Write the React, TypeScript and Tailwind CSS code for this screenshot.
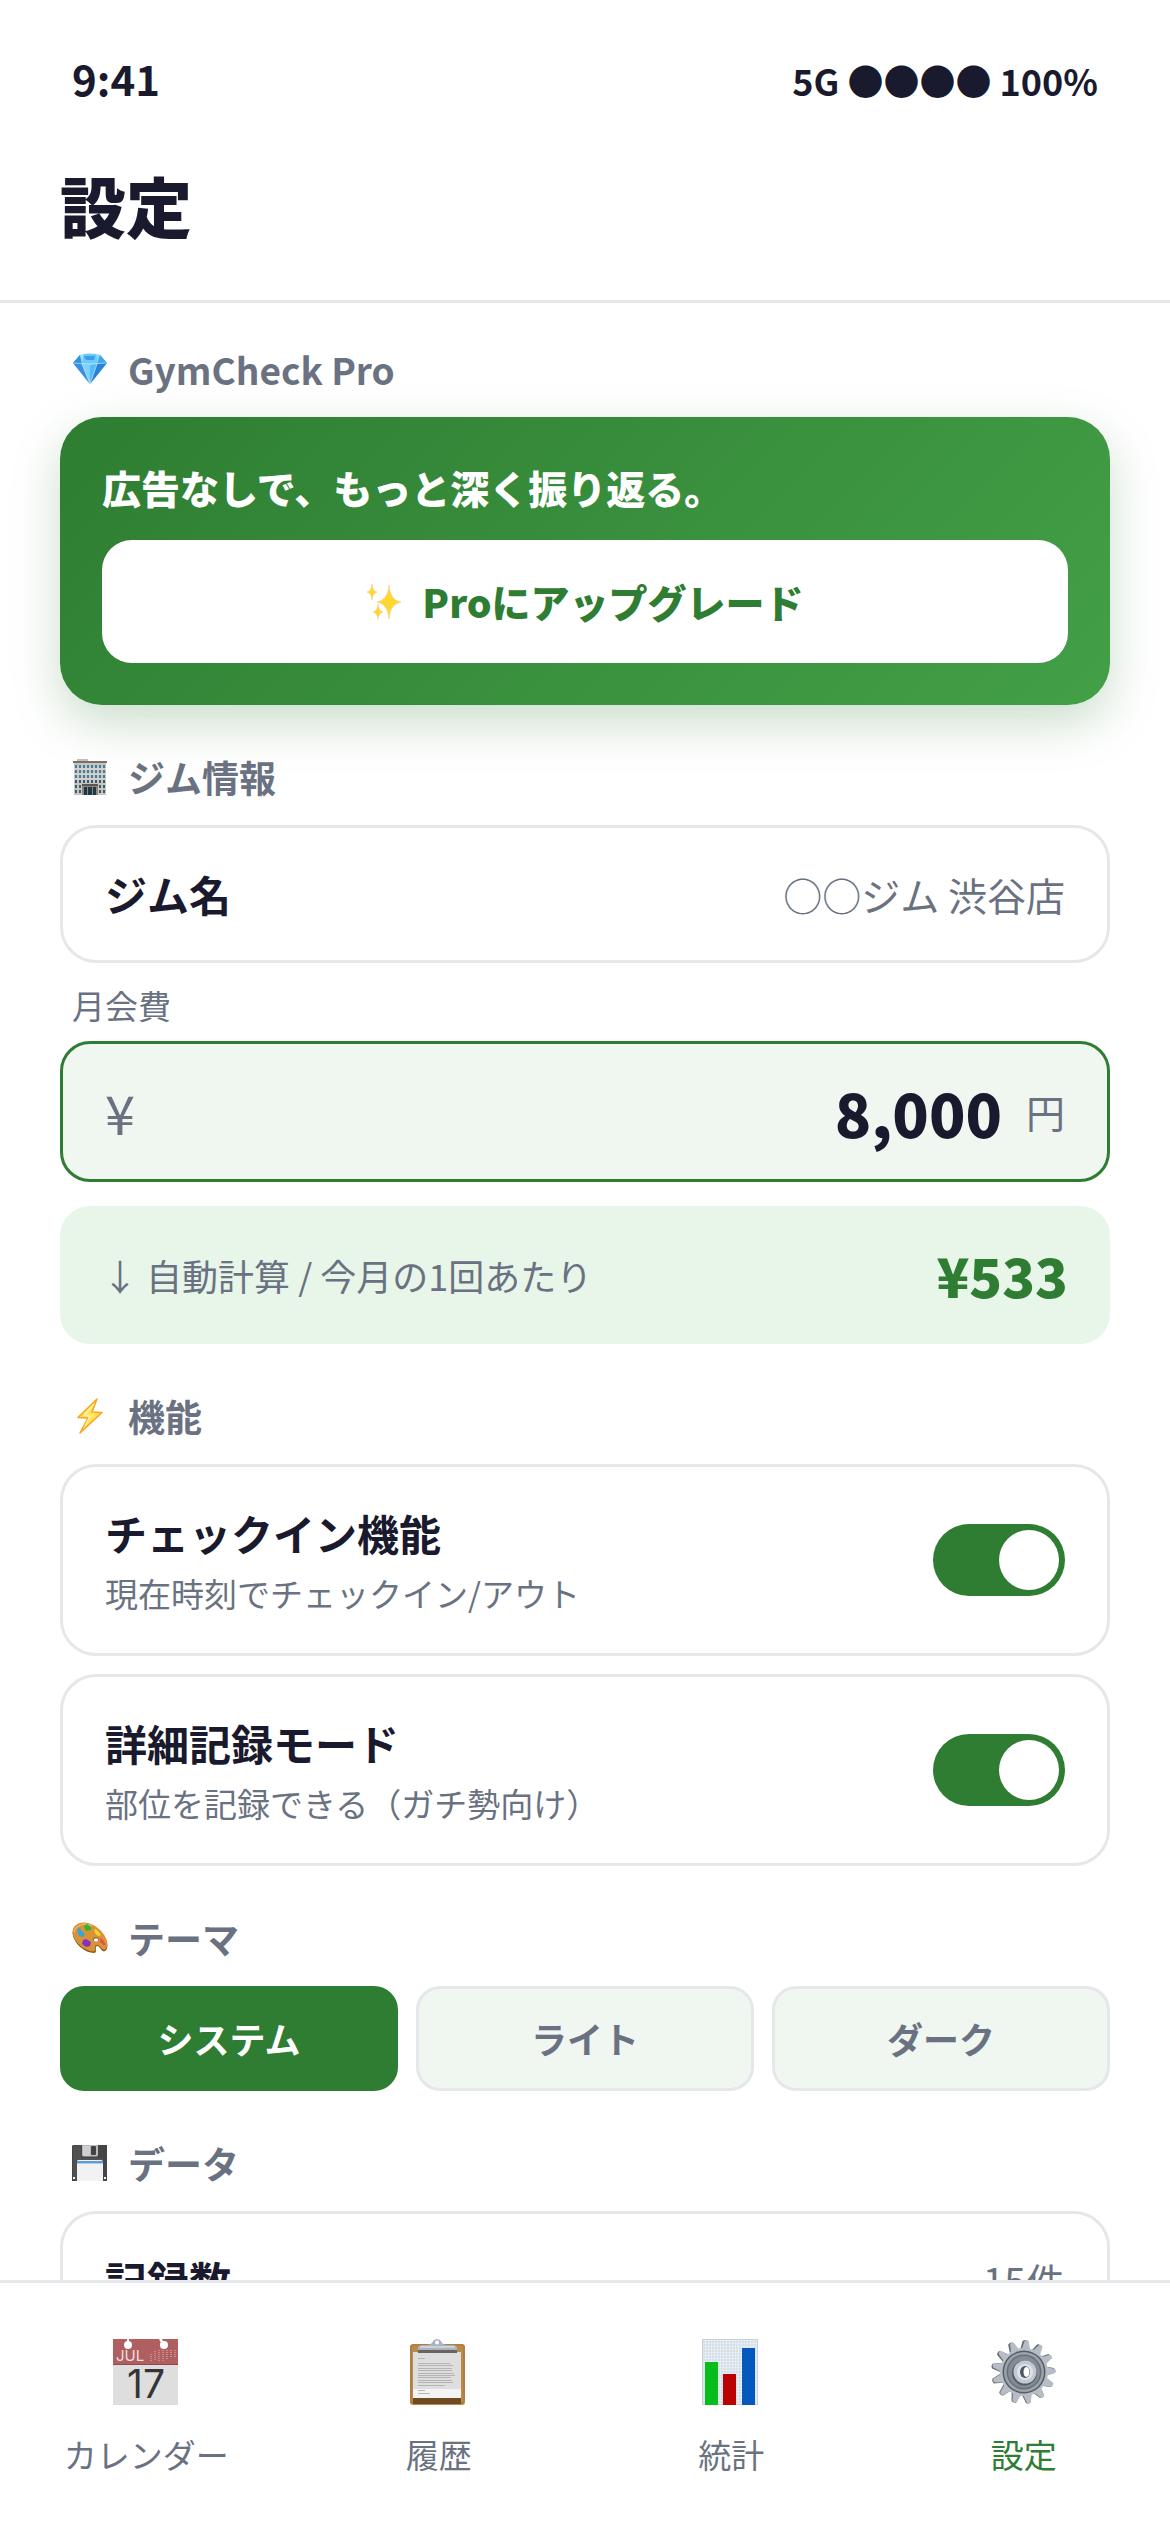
import { useState } from "react";
import type { ReactNode } from "react";

const inlineIcon = "h-9 w-9 shrink-0";
const tabIcon = "h-[66px] w-[66px]";

function DiamondIcon() {
  return (
    <svg viewBox="0 0 36 36" className={inlineIcon} aria-hidden="true">
      <path d="M8 4 Q18 2 28 4 L35 12 L18 33 L1 12Z" fill="#4db5f5" />
      <path d="M8 4 L1 12 L10 13Z" fill="#2f93dd" />
      <path d="M8 4 Q10 3 12 3 L10 13Z" fill="#a5e2ff" />
      <path d="M12 3 Q18 2 24 3 L25 13 H10Z" fill="#6ccbfb" />
      <path d="M12 5 H23 L22 9 H14Z" fill="#3b9fe6" />
      <path d="M28 4 L24 3 L25 13Z" fill="#8fdbff" />
      <path d="M28 4 L35 12 L25 13Z" fill="#3fa8ec" />
      <path d="M1 12 L10 13 L18 33Z" fill="#3a8fe0" />
      <path d="M10 13 H25 L18 33Z" fill="#7bd4ff" />
      <path d="M18 14 L25 13 L18 33Z" fill="#55bcf7" />
      <path d="M25 13 L35 12 L18 33Z" fill="#2b83d8" />
      <path d="M1 12 Q18 14 35 12 M10 13 L18 33 L25 13" fill="none" stroke="#d3f2ff" strokeWidth=".6" />
    </svg>
  );
}

function SparklesIcon() {
  return (
    <svg viewBox="0 0 36 36" className={inlineIcon} aria-hidden="true">
      <g fill="#fdd831" stroke="#f8c083" strokeWidth=".5">
        <path d="M23 1 Q24 16 35 18 Q24 20 23 35 Q22 20 11 18 Q22 16 23 1Z" />
        <path d="M6 0 Q6.500 7 11 8 Q6.500 9 6 16 Q5.500 9 1 8 Q5.500 7 6 0Z" />
        <path d="M12 20 Q12.500 27 17 28 Q12.500 29 12 35.500 Q11.500 29 7 28 Q11.500 27 12 20Z" />
      </g>
    </svg>
  );
}

function BuildingIcon() {
  const rows = [5, 10, 15, 20, 25, 30];
  const columns = [3, 7, 11, 15, 19, 23, 27, 31];
  return (
    <svg viewBox="0 0 36 36" className={inlineIcon} aria-hidden="true">
      <rect x="5" y="0" width="11" height="3" fill="#c3beb8" />
      <rect x="2" y="4" width="32" height="32" fill="#c9c4bf" />
      <rect x="1" y="2" width="34" height="2" fill="#77716c" />
      {rows.map((y) =>
        columns.map((x) => (
          <rect key={`${x}-${y}`} x={x} y={y + 1} width="2" height="3" fill={y < 20 ? "#3f7f9f" : "#365d72"} />
        )),
      )}
      <path d="M2 10H34M2 15H34M2 20H34" stroke="#e8e5e1" strokeWidth=".8" />
      <path d="M10 25H26V36H10Z" fill="#8f8580" />
      <rect x="10" y="25" width="16" height="2" fill="#5f5551" />
      <path d="M12 28H15V36H12ZM16 28H20V36H16ZM21 28H24V36H21Z" fill="#1d3846" />
    </svg>
  );
}

function BoltIcon() {
  return (
    <svg viewBox="0 0 36 36" className={inlineIcon} aria-hidden="true">
      <path
        d="M25 1 L6 19.500 L16 20 L8 35 L30 14.500 L20 14Z"
        fill="#ffe45c"
        stroke="#fda21b"
        strokeWidth="1.500"
        strokeLinejoin="round"
      />
      <path d="M22 6 L12 17.500 L18 18 L13 28" fill="none" stroke="#fff6b8" strokeWidth="1.200" />
    </svg>
  );
}

function PaletteIcon() {
  return (
    <svg viewBox="0 0 36 36" className={inlineIcon} aria-hidden="true">
      <path
        d="M4 6 C11 1 22 4 30 13 C36 20 37 29 33 31 C30 33 28 26 25 26 C22 27 26 33 22 33 C13 33 3 24 1 16 C0 12 1 8 4 6Z"
        fill="#8c5419"
      />
      <path
        d="M4 5 C11 0 22 3 30 12 C36 19 37 27 33 29.500 C30 31 28 25 25 25 C21 25 25 32 21 31.500 C13 31 3 23 1 15 C0 11 1 7 4 5Z"
        fill="#d99238"
      />
      <path d="M2 12 C4 5 12 2 20 6" fill="none" stroke="#efb763" strokeWidth="1.200" />
      <path d="M5 9 L8 8 L10 12 L13 13 L11 17 L7 16Z" fill="#2ca7e0" />
      <path d="M12 6 L15 4 L19 7 L19 10 L14 11Z" fill="#2fb52f" />
      <path d="M22 9 L25 10 L29 15 L26 16 L23 13Z" fill="#f7d62c" />
      <path d="M11 20 L14 19 L19 22 L18 26 L14 27 L10 24Z" fill="#8432bd" />
      <path d="M28 18 L31 20 L34 25 L31 25 L28 22Z" fill="#ee5047" />
      <ellipse cx="24" cy="19.500" rx="2.800" ry="2.200" fill="#8c5419" />
      <ellipse cx="24" cy="20" rx="2.300" ry="1.800" fill="#fff" />
    </svg>
  );
}

function FloppyIcon() {
  return (
    <svg viewBox="0 0 36 36" className={inlineIcon} aria-hidden="true">
      <path d="M1 0H35V36H0V1Z" fill="#454545" />
      <path d="M1 1H9V10Q9 13 12 13H31V35H1Z" fill="#505050" />
      <path d="M10 0H26V10Q26 11.500 24 11.500H12Q10 11.500 10 10Z" fill="#b9babd" />
      <path d="M11 1H18V11H12Q11 11 11 10Z" fill="#cfcfd2" />
      <rect x="19" y="1" width="5" height="9" rx="1" fill="#414244" />
      <path d="M6 15H29Q31 15 31 17V36H5V17Q5 15 6 15Z" fill="#f2f2f3" />
      <path d="M5 16H31V19H5Z" fill="#5b9bd8" />
      <path d="M5 18H31V19H5Z" fill="#a9cff0" />
      <path d="M1 32H3V34H1ZM32 32H34V34H32Z" fill="#f3f3f3" />
    </svg>
  );
}

function CalendarIcon() {
  return (
    <svg viewBox="0 0 66 66" className={tabIcon} aria-hidden="true">
      <rect width="65" height="66" fill="#dedede" />
      <rect width="65" height="26" fill="#af5f60" />
      <path d="M0 25.500H65" stroke="#914b4c" />
      <path d="M14 0H16V4H14ZM46 0H49L51 4H48Z" fill="#fff" />
      <circle cx="15" cy="6" r="4" fill="#fff" />
      <circle cx="51" cy="6" r="4" fill="#fff" />
      <text x="3" y="22" fontSize="15" fill="#f1dede" fontFamily="Inter, sans-serif">
        JUL
      </text>
      <path
        d="M38 15V22M42 12V22M46 11V22M50 11V22M54 11V20M58 11V19M62 11V18"
        stroke="#d39a9b"
        strokeWidth="1.500"
        strokeDasharray="1 1"
      />
      <text x="33" y="59" fontSize="39" textAnchor="middle" fill="#353535" fontFamily="Inter, sans-serif">
        17
      </text>
    </svg>
  );
}

function ClipboardIcon() {
  return (
    <svg viewBox="0 0 66 66" className={tabIcon} aria-hidden="true">
      <rect x="4" y="5" width="55" height="61" rx="3" fill="#b98a4c" />
      <rect x="5" y="6" width="53" height="58" rx="2" fill="none" stroke="#a87632" />
      <path d="M7 59H55V65H7Z" fill="#714b20" />
      <path d="M7 13H55V59H7Z" fill="#dededf" />
      <path d="M7 50H55V59H7Z" fill="#f3f3f4" />
      <path d="M12 11H51V14H12Z" fill="#6d625d" />
      <path d="M12 11V8Q13 6 17 6H22Q26 5 27 2Q31 -2 35 2Q36 5 40 6H46Q50 6 51 8V11Z" fill="#aab4bf" />
      <path d="M14 8H49" stroke="#d5dce3" strokeWidth="1.500" />
      <circle cx="31" cy="3.500" r="2" fill="#fff" />
      <path
        d="M12 19.500H19M12 24.500H44M12 26.500H47M12 29.500H46M12 31.500H46M12 34.500H48M12 36.500H49M12 38.500H45M12 41.500H46M12 43.500H47M12 46.500H39M12 51.500H19M12 54.500H24"
        stroke="#b4b4b6"
      />
    </svg>
  );
}

function ChartIcon() {
  const lines = [3, 6, 9, 12, 15, 18, 21, 24, 27, 30, 33, 36, 39, 42, 45, 48, 51, 54, 57, 60, 63];
  return (
    <svg viewBox="0 0 66 66" className={tabIcon} aria-hidden="true">
      <rect x="4" width="56" height="66" fill="#f1f5f8" />
      <g stroke="#c3d4e1" strokeWidth=".7">
        {lines.map((p) => (
          <path key={p} d={`M4 ${p}H60`} />
        ))}
        {lines.slice(1, 19).map((p) => (
          <path key={p} d={`M${p} 0V66`} />
        ))}
      </g>
      <rect x="4.500" y=".5" width="55" height="65" fill="none" stroke="#cbd0d4" />
      <rect x="7" y="23" width="13" height="43" fill="#06bd1b" />
      <rect x="25" y="35" width="13" height="31" fill="#ba0303" />
      <rect x="44" y="9" width="13" height="57" fill="#0459bd" />
    </svg>
  );
}

function GearIcon() {
  const teeth = [5, 33, 60, 88, 115, 143, 171, 198, 226, 254, 282, 309, 337];
  return (
    <svg viewBox="0 0 66 66" className={tabIcon} aria-hidden="true">
      <g fill="#666d75">
        {teeth.map((angle) => (
          <path key={angle} d="M27 12L29 2Q32 0 34 2L37 12Z" transform={`rotate(${angle} 32 33)`} />
        ))}
      </g>
      <g fill="#b7bdc6">
        {teeth.map((angle) => (
          <path key={angle} d="M28 13L31 2Q33 0 35 2L38 13Z" transform={`rotate(${angle} 33 33)`} />
        ))}
      </g>
      <circle cx="33" cy="33" r="24" fill="#b7bdc6" />
      <circle cx="33" cy="33" r="21.500" fill="#555c63" />
      <circle cx="33" cy="33" r="20" fill="#9ba3ab" />
      <circle cx="33" cy="33" r="17.500" fill="#686f77" />
      <circle cx="33" cy="33" r="16" fill="#838b94" />
      <circle cx="33.500" cy="34" r="12.500" fill="#555d66" />
      <circle cx="34" cy="33" r="11.500" fill="#c3c9d1" />
      <circle cx="34" cy="33" r="8" fill="#dfe3e9" />
      <ellipse cx="34" cy="33" rx="5" ry="6" fill="#4c5865" />
      <ellipse cx="35.500" cy="33" rx="3" ry="5" fill="#fff" />
    </svg>
  );
}

function Section({ icon, title, children }: { icon: ReactNode; title: string; children: ReactNode }) {
  return (
    <section className="pt-[45px] first:pt-[39px]">
      <h2 className="mb-[21px] flex items-center gap-5 px-3 text-[37px] leading-[54px] font-bold text-gray-500">
        {icon}
        {title}
      </h2>
      {children}
    </section>
  );
}

const rowCard = "flex items-center justify-between rounded-[36px] border-3 border-gray-200 px-[42px] py-9";

function ToggleRow({ id, title, note }: { id: string; title: string; note: string }) {
  return (
    <div className={rowCard}>
      <div>
        <label htmlFor={id} className="block text-[42px] leading-[60px] font-bold">
          {title}
        </label>
        <p id={`${id}-note`} className="mt-1.5 text-[33px] leading-[48px] text-gray-500">
          {note}
        </p>
      </div>
      <input
        id={id}
        type="checkbox"
        role="switch"
        defaultChecked
        aria-describedby={`${id}-note`}
        className="flex h-[72px] w-[132px] shrink-0 appearance-none items-center rounded-full bg-gray-300 p-1.5 before:h-[60px] before:w-[60px] before:rounded-full before:bg-white before:content-[''] checked:justify-end checked:bg-[#2e7d32]"
      />
    </div>
  );
}

const themes = ["システム", "ライト", "ダーク"];

const tabs = [
  { label: "カレンダー", href: "#calendar", icon: <CalendarIcon /> },
  { label: "履歴", href: "#history", icon: <ClipboardIcon /> },
  { label: "統計", href: "#stats", icon: <ChartIcon /> },
  { label: "設定", href: "#settings", icon: <GearIcon />, active: true },
];

export default function App() {
  const [theme, setTheme] = useState("システム");

  return (
    <div className="flex h-screen flex-col bg-white font-['Noto_Sans_CJK_JP',sans-serif] text-[#1a1a2e]">
      <header className="border-b-3 border-gray-200 py-12">
        <div className="flex items-baseline justify-between px-[72px] font-bold">
          <span className="text-[42px] leading-[60px]">9:41</span>
          <span className="text-[36px] leading-[48px]">5G ●●●● 100%</span>
        </div>
        <h1 className="mt-12 px-[60px] text-[66px] leading-[96px] font-black">設定</h1>
      </header>

      <main className="min-h-0 flex-1 overflow-y-auto px-[60px] [scrollbar-width:none]">
        <Section icon={<DiamondIcon />} title="GymCheck Pro">
          <div className="rounded-[42px] bg-[linear-gradient(135deg,#2e7d32,#43a047)] p-[42px] shadow-[0_18px_48px_rgba(46,125,50,0.25)]">
            <p className="mb-6 text-[39px] leading-[57px] font-black text-white">
              広告なしで、もっと深く振り返る。
            </p>
            <button
              type="button"
              className="flex w-full items-center justify-center gap-5 rounded-[30px] bg-white py-[33px] text-[39px] leading-[57px] font-black text-[#2e7d32]"
            >
              <SparklesIcon />
              Proにアップグレード
            </button>
          </div>
        </Section>

        <Section icon={<BuildingIcon />} title="ジム情報">
          <div className={rowCard}>
            <label htmlFor="gym-name" className="shrink-0 text-[42px] leading-[60px] font-bold">
              ジム名
            </label>
            <input
              id="gym-name"
              type="text"
              defaultValue="○○ジム 渋谷店"
              className="h-[60px] min-w-0 flex-1 text-right text-[39px] leading-[60px] text-gray-500 outline-none"
            />
          </div>
          <label htmlFor="monthly-fee" className="mt-[18px] mb-3 block px-3 text-[33px] leading-[48px] text-gray-500">
            月会費
          </label>
          <div className="flex items-center rounded-[30px] border-3 border-[#2e7d32] bg-[#f0f6f0] px-[42px] py-6 text-gray-500">
            <span className="text-[54px] leading-[78px]">¥</span>
            <input
              id="monthly-fee"
              type="text"
              inputMode="numeric"
              defaultValue="8,000"
              className="mr-6 h-[87px] min-w-0 flex-1 text-right text-[60px] leading-[87px] font-black text-[#1a1a2e] outline-none"
            />
            <span className="text-[39px] leading-[57px]">円</span>
          </div>
          <div className="mt-6 flex items-center justify-between rounded-[30px] bg-[#e8f5e9] px-[42px] py-[30px]">
            <span className="text-[36px] leading-[54px] text-gray-500">↓ 自動計算 / 今月の1回あたり</span>
            <output htmlFor="monthly-fee" className="text-[54px] leading-[78px] font-black text-[#2e7d32]">
              ¥533
            </output>
          </div>
        </Section>

        <Section icon={<BoltIcon />} title="機能">
          <div className="flex flex-col gap-[18px]">
            <ToggleRow id="check-in" title="チェックイン機能" note="現在時刻でチェックイン/アウト" />
            <ToggleRow id="detail-mode" title="詳細記録モード" note="部位を記録できる（ガチ勢向け）" />
          </div>
        </Section>

        <Section icon={<PaletteIcon />} title="テーマ">
          <div role="radiogroup" aria-label="テーマ" className="grid grid-cols-3 gap-[18px]">
            {themes.map((name) => (
              <label
                key={name}
                className="relative rounded-3xl border-3 border-gray-200 bg-[#f0f6f0] py-6 text-center text-[36px] leading-[51px] font-bold text-gray-500 has-checked:border-[#2e7d32] has-checked:bg-[#2e7d32] has-checked:text-white"
              >
                <input
                  type="radio"
                  name="theme"
                  value={name}
                  checked={theme === name}
                  onChange={() => setTheme(name)}
                  className="sr-only"
                />
                {name}
              </label>
            ))}
          </div>
        </Section>

        <Section icon={<FloppyIcon />} title="データ">
          <div className={rowCard}>
            <span className="text-[42px] leading-[60px] font-bold">記録数</span>
            <span className="text-[39px] leading-[60px] text-gray-500">15件</span>
          </div>
        </Section>
      </main>

      <nav className="grid grid-cols-4 border-t-3 border-gray-200 bg-white pt-14 pb-[54px]">
        {tabs.map((tab) => (
          <a
            key={tab.label}
            href={tab.href}
            aria-current={tab.active ? "page" : undefined}
            className="flex flex-col items-center gap-[25px] text-[33px] leading-[48px] text-gray-500 aria-[current=page]:text-[#2e7d32]"
          >
            {tab.icon}
            {tab.label}
          </a>
        ))}
      </nav>
    </div>
  );
}
